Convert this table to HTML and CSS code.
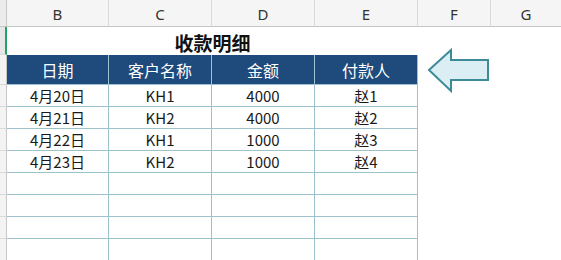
FILE: index.html
```html
<!DOCTYPE html>
<html lang="zh">
<head>
<meta charset="utf-8">
<link rel="stylesheet" href="styles.css">
<title>收款明细</title>
</head>
<body>
<div class="sheet">
  <div class="ch corner"></div>
  <div class="ch">B</div>
  <div class="ch">C</div>
  <div class="ch">D</div>
  <div class="ch">E</div>
  <div class="ch">F</div>
  <div class="ch last">G</div>

  <div class="rh sel"></div>
  <div class="title">收款明细</div>
  <div class="blank"></div>
  <div class="blank"></div>

  <div class="rh"></div>
  <div class="th">日期</div>
  <div class="th">客户名称</div>
  <div class="th">金额</div>
  <div class="th">付款人</div>
  <div class="blank"></div>
  <div class="blank"></div>

  <div class="rh"></div>
  <div class="td">4月20日</div><div class="td">KH1</div><div class="td">4000</div><div class="td">赵1</div>
  <div class="blank"></div><div class="blank"></div>

  <div class="rh"></div>
  <div class="td">4月21日</div><div class="td">KH2</div><div class="td">4000</div><div class="td">赵2</div>
  <div class="blank"></div><div class="blank"></div>

  <div class="rh"></div>
  <div class="td">4月22日</div><div class="td">KH1</div><div class="td">1000</div><div class="td">赵3</div>
  <div class="blank"></div><div class="blank"></div>

  <div class="rh"></div>
  <div class="td">4月23日</div><div class="td">KH2</div><div class="td">1000</div><div class="td">赵4</div>
  <div class="blank"></div><div class="blank"></div>

  <div class="rh"></div>
  <div class="td"></div><div class="td"></div><div class="td"></div><div class="td"></div>
  <div class="blank"></div><div class="blank"></div>

  <div class="rh"></div>
  <div class="td"></div><div class="td"></div><div class="td"></div><div class="td"></div>
  <div class="blank"></div><div class="blank"></div>

  <div class="rh"></div>
  <div class="td"></div><div class="td"></div><div class="td"></div><div class="td"></div>
  <div class="blank"></div><div class="blank"></div>

  <div class="rh"></div>
  <div class="td"></div><div class="td"></div><div class="td"></div><div class="td"></div>
  <div class="blank"></div><div class="blank"></div>

  <svg class="arrow" width="66" height="50" viewBox="0 0 66 50" aria-hidden="true">
    <polygon points="3,22 25,2 25,12 62,12 62,32 25,32 25,43" fill="#dbeef4" stroke="#3d8b98" stroke-width="2" stroke-linejoin="miter"/>
  </svg>
</div>
</body>
</html>
```

FILE: styles.css
```css
html, body {
  margin: 0;
  padding: 0;
  background: #ffffff;
  overflow: hidden;
}

.sheet {
  position: relative;
  width: 561px;
  height: 260px;
  display: grid;
  grid-template-columns: 7px 102px 103px 103px 103px 73px 1fr;
  grid-template-rows: 27px 28px 30px repeat(8, 22px);
  font-family: "Noto Sans CJK SC", "Noto Sans", sans-serif;
  color: #1a1a1a;
}

.sheet > div {
  box-sizing: border-box;
  display: flex;
  align-items: center;
  justify-content: center;
  white-space: nowrap;
}

.ch {
  background: #f5f5f5;
  border-right: 1px solid #d9d9d9;
  border-bottom: 1px solid #c6c6c6;
  font-family: "Noto Sans", "Liberation Sans", sans-serif;
  font-size: 15px;
  color: #333333;
  padding-top: 1px;
}

.ch.corner {
  background: #ececec;
  border-right: 1px solid #c6c6c6;
}

.ch.last {
  border-right: none;
}

.rh {
  background: #f3f3f3;
  border-right: 1px solid #c6c6c6;
  border-bottom: 1px solid #d9d9d9;
}

.rh.sel {
  border-right: 2px solid #21a366;
  background: #e6e6e6;
}

.title {
  grid-column: span 4;
  font-size: 19px;
  font-weight: 700;
  color: #111111;
  padding-top: 2px;
}

.blank {
  background: #ffffff;
}

.th {
  background: #1f4a7c;
  color: #ffffff;
  font-size: 16px;
  border-right: 1px solid #9cc3d0;
  border-bottom: 1px solid #9cc3d0;
}

.td {
  font-size: 15px;
  color: #1a1a1a;
  border-right: 1px solid #9cc3cc;
  border-bottom: 1px solid #9cc3cc;
}

.arrow {
  position: absolute;
  left: 426px;
  top: 48px;
}
```
